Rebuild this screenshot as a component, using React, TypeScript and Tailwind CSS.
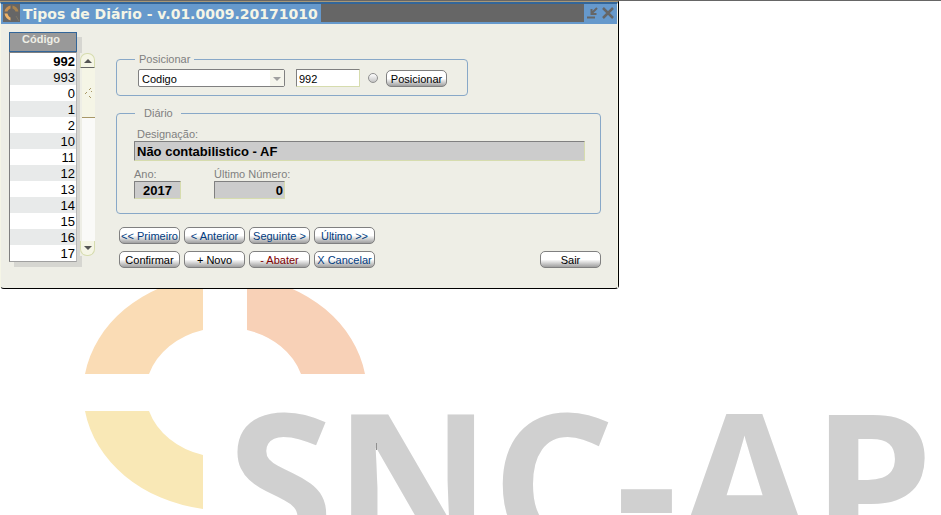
import type { ReactNode } from "react";

const codes = ["992", "993", "0", "1", "2", "10", "11", "12", "13", "14", "15", "16", "17"];

const sunken =
  "rounded-[1px] border border-t-[#808080] border-l-[#808080] border-r-[#d6dcae] border-b-[#d6dcae]";

function PushButton({ children, tone = "text-black" }: { children: ReactNode; tone?: string }) {
  return (
    <button
      type="button"
      className={`flex h-[17px] w-[61px] items-center justify-center rounded-[5px] border border-[#808080] bg-linear-to-b from-white from-50% to-[#a0a0a0] pt-0.5 text-[11px] leading-[15px] whitespace-nowrap ${tone}`}
    >
      {children}
    </button>
  );
}

function Watermark() {
  return (
    <svg
      className="absolute top-0 left-0"
      width="941"
      height="580"
      viewBox="0 0 941 580"
      aria-label="SNC-AP"
    >
      <path d="M85 374A142 118 0 0 1 203 276V330A79 66 0 0 0 149 374Z" fill="#fadcb5" />
      <path d="M247 276A142 118 0 0 1 365 374H301A79 66 0 0 0 247 330Z" fill="#f8d1b7" />
      <path d="M85 411H149A79 66 0 0 0 203 455V509A142 118 0 0 1 85 411Z" fill="#f9e8b6" />
      <text x="227" y="553" fontSize="194" fontWeight="700" fill="#d0d0d0" className="font-['Open_Sans',sans-serif]">
        SNC-AP
      </text>
      <path d="M376.500 443V450" stroke="#909090" />
    </svg>
  );
}

function TitleBar() {
  return (
    <header className="flex h-5 items-start bg-[#6699cc] pl-0.5">
      <svg width="17" height="18" viewBox="0 0 17 18" className="shrink-0 bg-[#666666]" aria-hidden="true">
        <path d="M7.500 1.500C4.500 2 2 4.500 1.500 7.500L4.500 7.500C5 6 6 5 7.500 4.500Z" fill="#c89050" />
        <path d="M9.500 1.500C12.500 2 15 4.500 15.500 7.500L12.500 7.500C12 6 11 5 9.500 4.500Z" fill="#a88450" />
        <path d="M1.500 9.500C2 13 4.500 15.500 7.500 16.500L7.500 13.500C6 13 5 11.500 4.500 9.500Z" fill="#f0b468" />
        <path d="M13 12L16 17" stroke="#807868" strokeWidth="1" />
      </svg>
      <h1 className="pr-[3px] pl-[3px] font-['DejaVu_Sans',Verdana,sans-serif] text-[14px] leading-5 font-bold whitespace-nowrap text-[#f5f5e6]">
        Tipos de Diário - v.01.0009.20171010
      </h1>
      <div className="h-[18px] flex-1 bg-[#666666]" />
      <button type="button" aria-label="Minimizar" className="ml-[3px] flex h-[18px] w-3 items-center">
        <svg width="11" height="12" viewBox="0 0 11 12" fill="none" stroke="#666666" aria-hidden="true">
          <path d="M10 1L5 6M4.500 2V7H9.500" strokeWidth="2" />
          <path d="M0 10.500H8" strokeWidth="2" />
        </svg>
      </button>
      <button type="button" aria-label="Fechar" className="mr-[3px] ml-[3px] flex h-[18px] w-3 items-center">
        <svg width="12" height="12" viewBox="0 0 12 12" stroke="#666666" aria-hidden="true">
          <path d="M1 1L11 11M11 1L1 11" strokeWidth="2.500" />
        </svg>
      </button>
    </header>
  );
}

function CodeList() {
  return (
    <div className="flex gap-[3px]">
      <table className="w-[68px] border-separate border-spacing-0 self-start shadow-[5px_5px_0_#d6d6d1]">
        <thead>
          <tr>
            <th className="h-5 border border-[#336699] bg-[#999999] p-0 pr-1 align-top text-[11px] leading-[13px] font-bold text-[#eeeee6]">
              Código
            </th>
          </tr>
        </thead>
        <tbody>
          {codes.map((code, i) => (
            <tr key={code}>
              <td
                className={`h-4 border-r border-l border-r-[#b8b8b8] border-l-[#808080] p-0 pt-px pr-px text-right text-[13px] leading-[15px] text-black ${
                  i % 2 ? "bg-[#e8eaea]" : "bg-white"
                } ${i === 0 ? "border-t border-t-[#808080] font-bold" : ""} ${
                  i === codes.length - 1 ? "border-b border-b-[#a0a0a0]" : ""
                }`}
              >
                {code}
              </td>
            </tr>
          ))}
        </tbody>
      </table>
      <div className="mt-[21px] flex h-[203px] w-[15px] flex-col bg-[#eeeee6]">
        <button
          type="button"
          aria-label="Subir"
          className="flex h-[15px] items-center justify-center rounded-t-[7px] border border-[#d6dcae] border-b-[#666666] bg-[#f5f5e6]"
        >
          <svg width="8" height="4" viewBox="0 0 8 4" aria-hidden="true">
            <path d="M0 4L4 0L8 4Z" fill="#555555" />
          </svg>
        </button>
        <div className="ml-0.5 flex h-[50px] items-center justify-center border-b border-[#a89868] bg-[#f5f5e6]">
          <svg width="9" height="12" viewBox="0 0 9 12" stroke="#a89868" aria-hidden="true">
            <path d="M1 7L3 5M5 3L7 1M5 9L7 11M8 4L7 5" />
          </svg>
        </div>
        <div className="ml-0.5 flex-1 bg-[#fafaf8]" />
        <button
          type="button"
          aria-label="Descer"
          className="flex h-[15px] items-center justify-center rounded-b-[7px] border border-t-0 border-[#d6dcae] bg-[#f5f5e6]"
        >
          <svg width="8" height="4" viewBox="0 0 8 4" aria-hidden="true">
            <path d="M0 0L4 4L8 0Z" fill="#555555" />
          </svg>
        </button>
      </div>
    </div>
  );
}

export default function App() {
  return (
    <main className="relative h-screen overflow-hidden border-t border-[#666666] bg-white font-['Liberation_Sans',Arial,sans-serif]">
      <div className="absolute -top-px left-0">
        <Watermark />
      </div>
      <section className="relative w-[619px] rounded-b-[4px] border-t border-r border-b border-t-[#a89878] border-r-black border-b-black bg-[#eeeee6]">
        <div className="border-t-2 border-r border-l border-t-[#336699] border-r-[#f5f5e6] border-l-[#f5f5e6]">
          <TitleBar />
          <div className="flex pt-2 pr-4 pb-5 pl-2">
            <CodeList />
            <div className="mt-[21px] ml-[21px] flex-1">
              <fieldset className="w-[352px] rounded-[4px] border border-[#88a8c8]">
                <legend className="ml-[18px] px-1 text-[11px] leading-3 text-[#808080]">Posicionar</legend>
                <div className="flex items-center pt-1 pb-2 pl-[21px]">
                  <div className="relative">
                    <select
                      aria-label="Campo"
                      className="block h-[18px] w-[147px] appearance-none rounded-[2px] border border-[#808080] bg-white pt-[3px] pl-[3px] text-[11px] leading-[13px] text-black"
                    >
                      <option>Codigo</option>
                    </select>
                    <span className="pointer-events-none absolute inset-y-px right-px flex w-[14px] items-center justify-center bg-[#f5f5ec] pt-0.5">
                      <svg width="8" height="4" viewBox="0 0 8 4" aria-hidden="true">
                        <path d="M0 0H8L4 4Z" fill="#a0a0a0" />
                      </svg>
                    </span>
                  </div>
                  <input
                    aria-label="Valor"
                    defaultValue="992"
                    className={`ml-[11px] h-[18px] w-16 bg-white pt-px pl-0.5 text-[11px] text-black ${sunken}`}
                  />
                  <input
                    type="radio"
                    aria-label="Procurar"
                    className="ml-2 size-[10px] appearance-none rounded-full border border-[#909090] bg-linear-to-b from-white to-[#c4c4c4]"
                  />
                  <div className="ml-2 pt-px">
                    <PushButton>Posicionar</PushButton>
                  </div>
                </div>
              </fieldset>

              <fieldset className="mt-[11px] rounded-[4px] border border-[#88a8c8]">
                <legend className="ml-[18px] pr-2 pl-[9px] text-[11px] leading-3 text-[#808080]">Diário</legend>
                <div className="pt-[9px] pr-[15px] pb-[14px] pl-[17px] text-[11px] leading-3 text-[#808080]">
                  <label htmlFor="designacao" className="block pl-[3px]">
                    Designação:
                  </label>
                  <input
                    id="designacao"
                    readOnly
                    defaultValue="Não contabilistico - AF"
                    className={`mt-px block h-5 w-full bg-[#cccccc] pl-0.5 text-[13px] font-bold text-black ${sunken}`}
                  />
                  <div className="mt-[7px] flex gap-[33px]">
                    <div className="w-[47px]">
                      <label htmlFor="ano" className="block">
                        Ano:
                      </label>
                      <input
                        id="ano"
                        readOnly
                        defaultValue="2017"
                        className={`mt-px block h-[18px] w-full bg-[#cccccc] pt-px text-center text-[13px] font-bold text-black ${sunken}`}
                      />
                    </div>
                    <div className="w-[71px]">
                      <label htmlFor="ultimo" className="block whitespace-nowrap">
                        Último Número:
                      </label>
                      <input
                        id="ultimo"
                        readOnly
                        defaultValue="0"
                        className={`mt-px block h-[18px] w-full bg-[#cccccc] pt-px pr-px text-right text-[13px] font-bold text-black ${sunken}`}
                      />
                    </div>
                  </div>
                </div>
              </fieldset>

              <div className="mt-[13px] flex gap-1 pl-[3px]">
                <PushButton tone="text-[#003b80]">&lt;&lt; Primeiro</PushButton>
                <PushButton tone="text-[#003b80]">&lt; Anterior</PushButton>
                <PushButton tone="text-[#003b80]">Seguinte &gt;</PushButton>
                <PushButton tone="text-[#003b80]">Último &gt;&gt;</PushButton>
              </div>
              <div className="mt-[7px] flex gap-1 pl-[3px]">
                <PushButton>Confirmar</PushButton>
                <PushButton>+ Novo</PushButton>
                <PushButton tone="text-[#800000]">- Abater</PushButton>
                <PushButton tone="text-[#003b80]">X Cancelar</PushButton>
                <div className="ml-auto">
                  <PushButton>Sair</PushButton>
                </div>
              </div>
            </div>
          </div>
        </div>
      </section>
    </main>
  );
}
